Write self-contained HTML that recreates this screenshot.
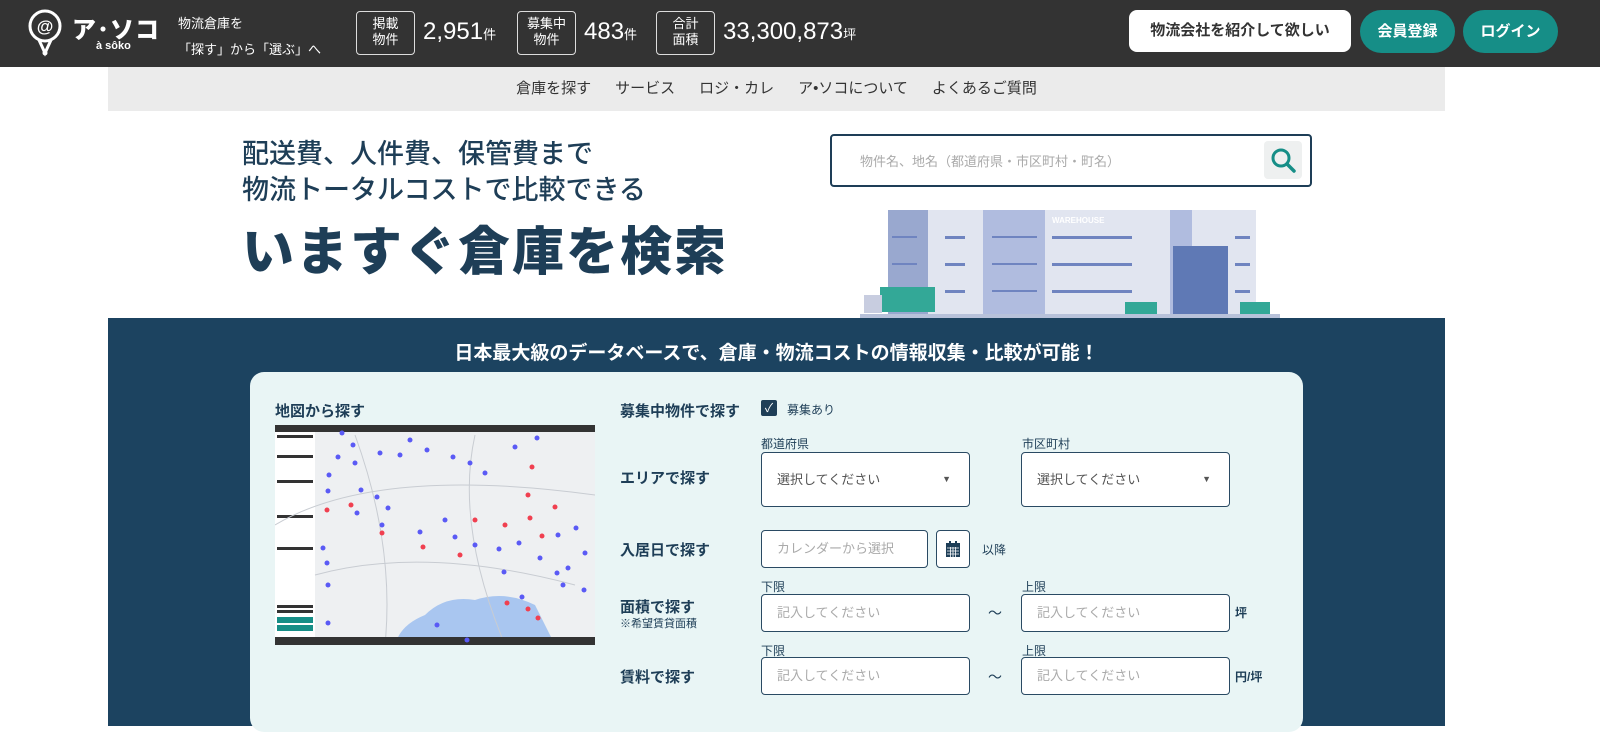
<!DOCTYPE html>
<html><head><meta charset="utf-8"><style>
*{box-sizing:border-box;margin:0;padding:0}
body{width:1600px;height:726px;overflow:hidden;background:#fff;font-family:"Liberation Sans","Noto Sans CJK JP",sans-serif;position:relative;color:#1e3e57}
.abs{position:absolute}
.hdr{left:0;top:0;width:1600px;height:67px;background:#333}
.box{border:1px solid #ddd;border-radius:4px;color:#fff;font-size:13px;line-height:16px;text-align:center;padding-top:4px;height:44px;top:11px}
.num{color:#fff;font-size:24px;top:18px}
.num small{font-size:13px}
.btn{border-radius:22px;height:43px;top:10px;font-size:15px;font-weight:bold;text-align:center;line-height:43px}
.nav{left:108px;top:67px;width:1337px;height:44px;background:#ebebeb;font-size:15px;color:#333;text-align:center;line-height:44px;word-spacing:0}
.nav span{margin:0 12px}
.dark{left:108px;top:318px;width:1337px;height:408px;background:#1c4360}
.card{left:250px;top:372px;width:1053px;height:360px;background:#e9f5f5;border-radius:14px}
.lab{font-size:15px;font-weight:bold;color:#1e3e57}
.sm{font-size:12px;color:#1e3e57}
.in{background:#fff;border:1px solid #2a4a63;border-radius:4px;font-size:13px;color:#aaa;padding-left:15px}
</style></head><body>
<div class="abs hdr"></div>
<svg class="abs" style="left:28px;top:9px" width="34" height="48" viewBox="0 0 34 48"><circle cx="17" cy="17" r="15" fill="none" stroke="#fff" stroke-width="3"/><text x="17" y="23" font-size="17" font-weight="bold" fill="#fff" text-anchor="middle" font-family="Liberation Sans">@</text><path d="M11 31 L17 44 L23 31" fill="none" stroke="#fff" stroke-width="3"/><circle cx="17" cy="44" r="2.5" fill="#fff"/></svg>
<div class="abs" style="left:72px;top:10px;color:#fff;font-size:24px;font-weight:900;letter-spacing:1px">ア･ソコ</div>
<div class="abs" style="left:96px;top:40px;color:#fff;font-size:11px;font-weight:bold">à sôko</div>
<div class="abs" style="left:178px;top:11px;color:#fff;font-size:13px;line-height:26px">物流倉庫を<br>「探す」から「選ぶ」へ</div>
<div class="abs box" style="left:356px;width:59px">掲載<br>物件</div>
<div class="abs num" style="left:423px">2,951<small>件</small></div>
<div class="abs box" style="left:517px;width:59px">募集中<br>物件</div>
<div class="abs num" style="left:584px">483<small>件</small></div>
<div class="abs box" style="left:656px;width:59px">合計<br>面積</div>
<div class="abs num" style="left:723px">33,300,873<small>坪</small></div>
<div class="abs btn" style="left:1129px;width:222px;background:#fff;color:#333;border-radius:8px;height:42px;line-height:42px">物流会社を紹介して欲しい</div>
<div class="abs btn" style="left:1360px;width:95px;background:#168e87;color:#fff">会員登録</div>
<div class="abs btn" style="left:1463px;width:95px;background:#168e87;color:#fff">ログイン</div>
<div class="abs nav"><span>倉庫を探す</span><span>サービス</span><span>ロジ・カレ</span><span>ア•ソコについて</span><span>よくあるご質問</span></div>
<div class="abs" style="left:242px;top:136px;font-size:27px;line-height:36px;color:#1e3e57;font-weight:500">配送費、人件費、保管費まで<br>物流トータルコストで比較できる</div>
<div class="abs" style="left:242px;top:210px;font-size:52px;font-weight:900;color:#1e3e57;letter-spacing:2px">いますぐ倉庫を検索</div>
<div class="abs" style="left:830px;top:134px;width:482px;height:53px;border:2px solid #1e3e57;border-radius:4px;background:#fff"></div>
<div class="abs" style="left:860px;top:151px;font-size:13px;color:#aaa">物件名、地名（都道府県・市区町村・町名）</div>
<div class="abs" style="left:1264px;top:141px;width:38px;height:38px;background:#eef0f0;border-radius:4px"></div>
<svg class="abs" style="left:1269px;top:146px" width="28" height="28" viewBox="0 0 28 28"><circle cx="12" cy="12" r="8" fill="none" stroke="#168e87" stroke-width="3"/><path d="M18 18 L25 25" stroke="#168e87" stroke-width="3.5" stroke-linecap="round"/></svg>
<svg class="abs" style="left:860px;top:210px" width="420" height="108" viewBox="0 0 420 108">
<rect x="28" y="0" width="368" height="108" fill="#e1e5f0"/>
<rect x="28" y="0" width="40" height="108" fill="#99a8cf"/>
<rect x="123" y="0" width="62" height="108" fill="#b0bcdf"/>
<rect x="310" y="0" width="22" height="108" fill="#b0bcdf"/>
<text x="192" y="13" font-size="8" fill="#fff" font-weight="bold" font-family="Liberation Sans">WAREHOUSE</text>
<rect x="313" y="36" width="55" height="72" fill="#5f79b5"/>
<g fill="#6f84c0"><rect x="192" y="26" width="80" height="3"/><rect x="192" y="53" width="80" height="3"/><rect x="192" y="80" width="80" height="3"/>
<rect x="132" y="26" width="45" height="2"/><rect x="132" y="53" width="45" height="2"/><rect x="132" y="80" width="45" height="2"/>
<rect x="32" y="26" width="25" height="2"/><rect x="32" y="53" width="25" height="2"/><rect x="85" y="26" width="20" height="3"/><rect x="85" y="53" width="20" height="3"/><rect x="85" y="80" width="20" height="3"/>
<rect x="375" y="26" width="15" height="3"/><rect x="375" y="53" width="15" height="3"/><rect x="375" y="80" width="15" height="3"/></g>
<rect x="20" y="77" width="55" height="25" fill="#33a897"/><rect x="4" y="85" width="18" height="18" fill="#c8cde0"/>
<rect x="265" y="92" width="32" height="12" fill="#33a897"/><rect x="380" y="92" width="30" height="12" fill="#33a897"/>
<rect x="0" y="104" width="420" height="4" fill="#b8c2da"/>
</svg>
<div class="abs dark"></div>
<div class="abs" style="left:108px;top:338px;width:1337px;text-align:center;color:#fff;font-size:19px;font-weight:bold">日本最大級のデータベースで、倉庫・物流コストの情報収集・比較が可能！</div>
<div class="abs card"></div>
<div class="abs lab" style="left:275px;top:400px">地図から探す</div>
<svg class="abs" style="left:275px;top:425px" width="320" height="220" viewBox="0 0 320 220">
<rect width="320" height="220" fill="#eef0f2"/>
<rect width="320" height="7" fill="#333"/>
<rect x="0" y="7" width="40" height="205" fill="#fff"/>
<g fill="#333"><rect x="2" y="10" width="36" height="3"/><rect x="2" y="30" width="36" height="3"/><rect x="2" y="55" width="36" height="3"/><rect x="2" y="90" width="36" height="3"/><rect x="2" y="122" width="36" height="3"/><rect x="2" y="180" width="36" height="3"/><rect x="2" y="185" width="36" height="3"/></g>
<rect x="2" y="192" width="36" height="6" fill="#168e87"/><rect x="2" y="200" width="36" height="6" fill="#168e87"/>
<path d="M120 220 Q125 200 150 190 Q170 170 200 175 Q230 165 260 180 L280 220Z" fill="#a9c6f0"/>
<path d="M0 100 Q100 40 320 70 M40 150 Q150 120 300 160 M80 10 Q120 120 110 220 M200 10 Q180 100 230 220" stroke="#c8ccd2" fill="none"/>
<rect x="0" y="212" width="320" height="8" fill="#333"/>
<g fill="#5a5af5"><circle cx="67" cy="8" r="2.5"/><circle cx="78" cy="20" r="2.5"/><circle cx="63" cy="32" r="2.5"/><circle cx="80" cy="38" r="2.5"/><circle cx="105" cy="28" r="2.5"/><circle cx="125" cy="30" r="2.5"/><circle cx="135" cy="15" r="2.5"/><circle cx="152" cy="25" r="2.5"/><circle cx="178" cy="32" r="2.5"/><circle cx="195" cy="38" r="2.5"/><circle cx="210" cy="48" r="2.5"/><circle cx="240" cy="22" r="2.5"/><circle cx="262" cy="13" r="2.5"/><circle cx="54" cy="50" r="2.5"/><circle cx="53" cy="66" r="2.5"/><circle cx="86" cy="65" r="2.5"/><circle cx="102" cy="72" r="2.5"/><circle cx="82" cy="88" r="2.5"/><circle cx="113" cy="83" r="2.5"/><circle cx="107" cy="100" r="2.5"/><circle cx="145" cy="107" r="2.5"/><circle cx="170" cy="95" r="2.5"/><circle cx="180" cy="112" r="2.5"/><circle cx="200" cy="120" r="2.5"/><circle cx="224" cy="124" r="2.5"/><circle cx="244" cy="118" r="2.5"/><circle cx="301" cy="103" r="2.5"/><circle cx="310" cy="128" r="2.5"/><circle cx="283" cy="110" r="2.5"/><circle cx="293" cy="143" r="2.5"/><circle cx="282" cy="148" r="2.5"/><circle cx="265" cy="133" r="2.5"/><circle cx="229" cy="147" r="2.5"/><circle cx="247" cy="172" r="2.5"/><circle cx="288" cy="160" r="2.5"/><circle cx="309" cy="165" r="2.5"/><circle cx="48" cy="123" r="2.5"/><circle cx="52" cy="138" r="2.5"/><circle cx="53" cy="160" r="2.5"/><circle cx="53" cy="198" r="2.5"/><circle cx="162" cy="200" r="2.5"/><circle cx="192" cy="215" r="2.5"/></g>
<g fill="#f04050"><circle cx="52" cy="85" r="2.5"/><circle cx="76" cy="80" r="2.5"/><circle cx="107" cy="108" r="2.5"/><circle cx="148" cy="122" r="2.5"/><circle cx="185" cy="130" r="2.5"/><circle cx="200" cy="95" r="2.5"/><circle cx="230" cy="100" r="2.5"/><circle cx="255" cy="93" r="2.5"/><circle cx="253" cy="70" r="2.5"/><circle cx="280" cy="82" r="2.5"/><circle cx="257" cy="42" r="2.5"/><circle cx="267" cy="111" r="2.5"/><circle cx="263" cy="193" r="2.5"/><circle cx="232" cy="178" r="2.5"/><circle cx="253" cy="184" r="2.5"/></g>
</svg>
<div class="abs lab" style="left:620px;top:400px">募集中物件で探す</div>
<div class="abs" style="left:761px;top:400px;width:16px;height:16px;background:#1e3e57;border-radius:2px;color:#fff;font-size:12px;text-align:center;line-height:16px">✓</div>
<div class="abs sm" style="left:787px;top:401px">募集あり</div>
<div class="abs sm" style="left:761px;top:435px">都道府県</div>
<div class="abs sm" style="left:1022px;top:435px">市区町村</div>
<div class="abs lab" style="left:620px;top:467px">エリアで探す</div>
<div class="abs in" style="left:761px;top:452px;width:209px;height:55px;line-height:53px;color:#555">選択してください<span style="position:absolute;right:18px;font-size:9px;color:#555">▼</span></div>
<div class="abs in" style="left:1021px;top:452px;width:209px;height:55px;line-height:53px;color:#555">選択してください<span style="position:absolute;right:18px;font-size:9px;color:#555">▼</span></div>
<div class="abs lab" style="left:620px;top:539px">入居日で探す</div>
<div class="abs in" style="left:761px;top:530px;width:167px;height:38px;line-height:36px">カレンダーから選択</div>
<div class="abs in" style="left:936px;top:530px;width:34px;height:38px;padding:0"><svg style="position:absolute;left:9px;top:10px" width="14" height="16" viewBox="0 0 14 16"><rect x="0" y="2" width="14" height="14" fill="#1e3e57"/><rect x="3" y="0" width="2" height="4" fill="#1e3e57"/><rect x="9" y="0" width="2" height="4" fill="#1e3e57"/><path d="M1 7H13M1 10H13M1 13H13M4.5 6V16M7 6V16M9.5 6V16" stroke="#fff" stroke-width="0.8"/></svg></div>
<div class="abs sm" style="left:982px;top:541px">以降</div>
<div class="abs sm" style="left:761px;top:578px">下限</div>
<div class="abs sm" style="left:1022px;top:578px">上限</div>
<div class="abs lab" style="left:620px;top:596px">面積で探す</div>
<div class="abs" style="left:620px;top:615px;font-size:11px;color:#1e3e57">※希望賃貸面積</div>
<div class="abs in" style="left:761px;top:594px;width:209px;height:38px;line-height:36px">記入してください</div>
<div class="abs" style="left:988px;top:603px;font-size:14px">～</div>
<div class="abs in" style="left:1021px;top:594px;width:209px;height:38px;line-height:36px">記入してください</div>
<div class="abs sm" style="left:1235px;top:604px;font-weight:bold">坪</div>
<div class="abs sm" style="left:761px;top:642px">下限</div>
<div class="abs sm" style="left:1022px;top:642px">上限</div>
<div class="abs lab" style="left:620px;top:666px">賃料で探す</div>
<div class="abs in" style="left:761px;top:657px;width:209px;height:38px;line-height:36px">記入してください</div>
<div class="abs" style="left:988px;top:667px;font-size:14px">～</div>
<div class="abs in" style="left:1021px;top:657px;width:209px;height:38px;line-height:36px">記入してください</div>
<div class="abs sm" style="left:1235px;top:668px;font-weight:bold">円/坪</div>
</body></html>
